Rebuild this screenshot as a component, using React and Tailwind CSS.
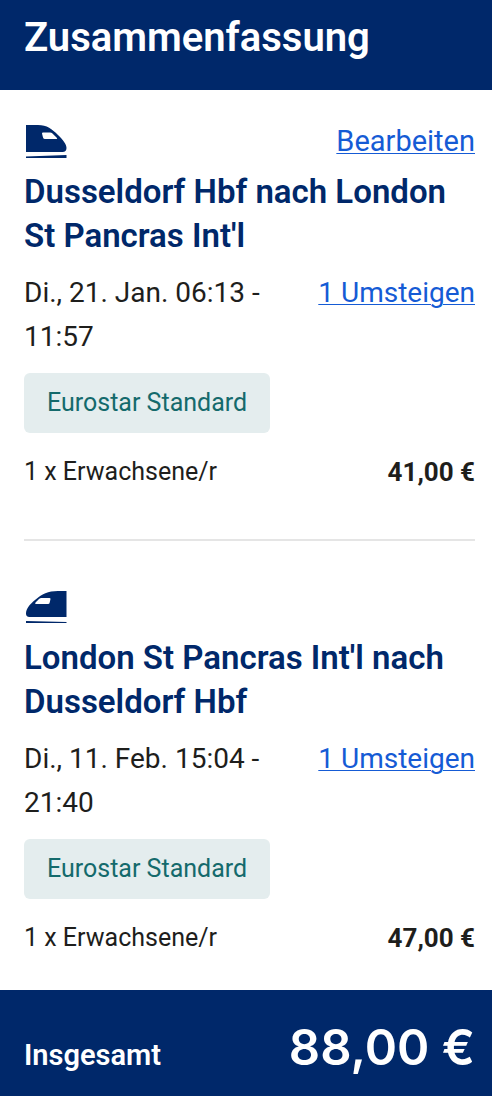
import React from 'react'

const journeys = [
  {
    id: 'outbound',
    title: "Dusseldorf Hbf nach London St Pancras Int'l",
    time: 'Di., 21. Jan. 06:13 - 11:57',
    fare: 'Eurostar Standard',
    passengers: '1 x Erwachsene/r',
    price: '41,00 €',
    editable: true,
  },
  {
    id: 'return',
    title: "London St Pancras Int'l nach Dusseldorf Hbf",
    time: 'Di., 11. Feb. 15:04 - 21:40',
    fare: 'Eurostar Standard',
    passengers: '1 x Erwachsene/r',
    price: '47,00 €',
    editable: false,
  },
]

const OutboundTrain = () => (
  <svg width="44" height="34" viewBox="-1 0 44 34" fill="#00286a" aria-hidden="true">
    <path
      fillRule="evenodd"
      d="M1 0H13C22 0 27 4 33 10C38 15 41.500 19 41.500 23C41.500 25.500 40 27 37.500 27H1ZM18 7.500Q17 7.500 17 8.500L18 12.500Q18.500 14 20 14H31.500Q32.500 14 32 13L27.500 8.500Q26.500 7.500 25 7.500Z"
    />
    <path d="M1 31.500L41.500 30V33H1Z" />
  </svg>
)

const ReturnTrain = () => (
  <svg width="44" height="34" viewBox="-1 1 44 34" fill="#00286a" aria-hidden="true">
    <path
      fillRule="evenodd"
      d="M41.500 1V27H4.500C2 27 1 25.500 1 23.500C1 19 5 14 10 10C17 4 23 1 33 1ZM16.500 8Q15 8 14 9L10.500 12.500Q9.500 14 11 14H23Q24.500 14 24.700 12.500L25.500 9Q25.500 8 24.500 8Z"
    />
    <path d="M1 31L41.500 32V33H1Z" />
  </svg>
)

const Journey = ({ journey }) => {
  return (
    <section className="text-[#1e1e1c]">
      <div className="flex items-start justify-between h-11">
        <div className="pt-[6px]">
          {journey.editable ? <OutboundTrain /> : <ReturnTrain />}
        </div>
        {journey.editable && (
          <a href="#edit" className="text-[29px] leading-[44px] text-[#155bd5] underline decoration-1 underline-offset-2">
            Bearbeiten
          </a>
        )}
      </div>

      <h2 className="mt-[7px] text-[33px] leading-[44px] font-semibold text-[#00286a]">{journey.title}</h2>

      <div className="mt-[13px] flex items-start justify-between text-[28px] leading-[44px]">
        <p className="w-[260px]">{journey.time}</p>
        <a href={`#${journey.id}`} className="text-[#155bd5] underline decoration-1 underline-offset-2 whitespace-nowrap">
          1 Umsteigen
        </a>
      </div>

      <div className="mt-[14px] inline-flex items-center h-[60px] px-[23px] rounded-md bg-[#e4edee] text-[25px] text-[#146a6c]">
        {journey.fare}
      </div>

      <div className="mt-[17px] flex items-center justify-between leading-[44px]">
        <span className="text-[25px]">{journey.passengers}</span>
        <strong className="text-[26px] font-bold">{journey.price}</strong>
      </div>
    </section>
  )
}

const App = () => {
  return (
    <div className="bg-white font-['Roboto',sans-serif]">
      <header className="bg-[#00286a] pl-6 pr-[17px] pt-4 pb-[30px]">
        <h1 className="text-[40px] leading-[44px] font-semibold text-white">Zusammenfassung</h1>
      </header>

      <main className="pl-6 pr-[17px] pt-[29px] pb-[30px]">
        <Journey journey={journeys[0]} />
        <hr className="mt-[45px] mb-[44px] border-t-2 border-[#e5e5e5]" />
        <Journey journey={journeys[1]} />
      </main>

      <footer className="bg-[#00286a] pl-6 pr-[17px] pt-7 pb-[18px] flex items-baseline justify-between text-white font-semibold">
        <span className="text-[29px]">Insgesamt</span>
        <span className="font-['Inter',sans-serif] text-[49px] leading-[60px]">88,00 €</span>
      </footer>
    </div>
  )
}

export default App
